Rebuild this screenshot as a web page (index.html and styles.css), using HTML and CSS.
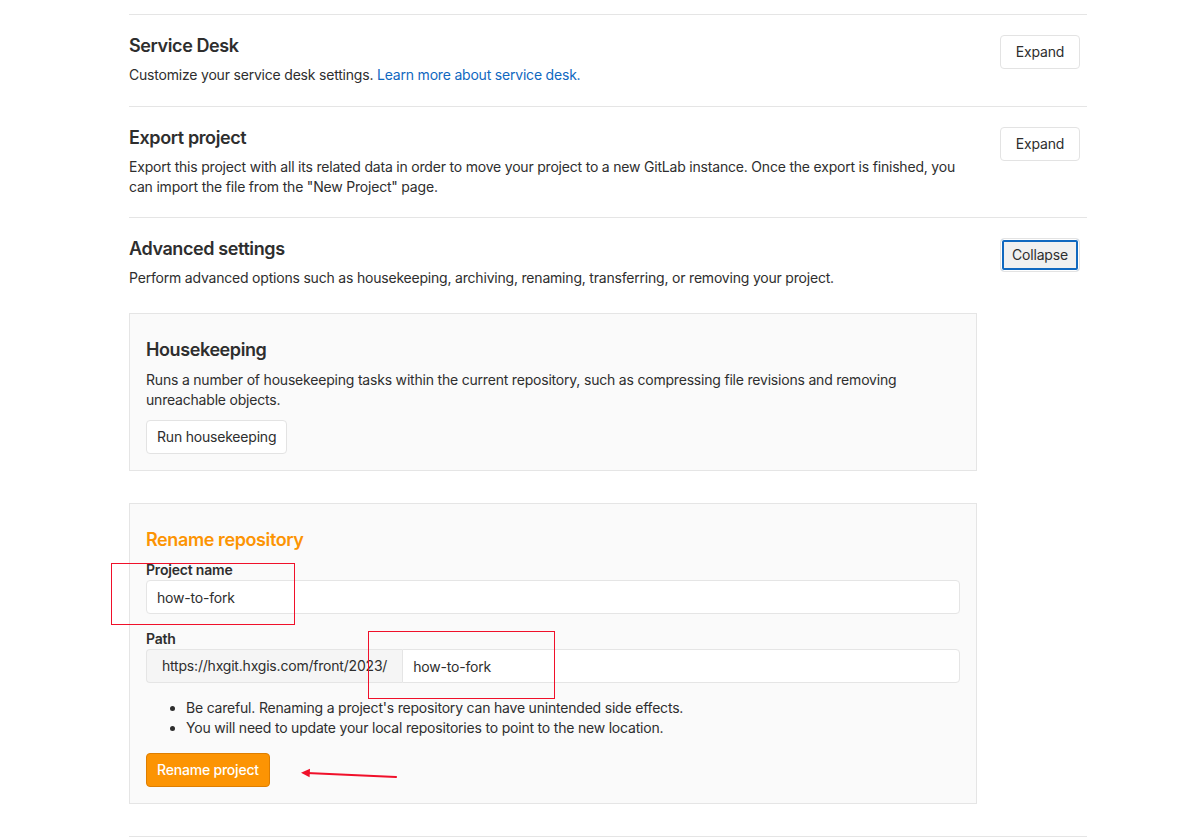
FILE: index.html
```html
<!DOCTYPE html>
<html lang="en">
<head>
<meta charset="utf-8">
<title>Settings</title>
<link rel="stylesheet" href="styles.css">
</head>
<body>
<div class="page">
  <section class="settings">
    <div class="settings-header">
      <div class="settings-text">
        <h4 class="settings-title">Service Desk</h4>
        <p class="settings-desc">Customize your service desk settings. <a href="#" class="link">Learn more about service desk.</a></p>
      </div>
      <button class="btn">Expand</button>
    </div>
  </section>

  <section class="settings settings-tight">
    <div class="settings-header">
      <div class="settings-text">
        <h4 class="settings-title">Export project</h4>
        <p class="settings-desc">Export this project with all its related data in order to move your project to a new GitLab instance. Once the export is finished, you can import the file from the "New Project" page.</p>
      </div>
      <button class="btn">Expand</button>
    </div>
  </section>

  <section class="settings settings-last">
    <div class="settings-header">
      <div class="settings-text">
        <h4 class="settings-title">Advanced settings</h4>
        <p class="settings-desc">Perform advanced options such as housekeeping, archiving, renaming, transferring, or removing your project.</p>
      </div>
      <button class="btn btn-focus">Collapse</button>
    </div>

    <div class="settings-content">
      <div class="sub-box">
        <h4 class="sub-title">Housekeeping</h4>
        <p class="sub-desc">Runs a number of housekeeping tasks within the current repository, such as compressing file revisions and removing unreachable objects.</p>
        <button class="btn">Run housekeeping</button>
      </div>

      <div class="sub-box rename-box">
        <h4 class="sub-title warning">Rename repository</h4>
        <div class="form-group">
          <label class="label">Project name</label>
          <input class="input" type="text" value="how-to-fork">
        </div>
        <div class="form-group">
          <label class="label">Path</label>
          <div class="input-group">
            <span class="prefix">https://hxgit.hxgis.com/front/2023/</span>
            <input class="input input-grow" type="text" value="how-to-fork">
          </div>
        </div>
        <ul class="notes">
          <li>Be careful. Renaming a project's repository can have unintended side effects.</li>
          <li>You will need to update your local repositories to point to the new location.</li>
        </ul>
        <button class="btn btn-warning">Rename project</button>
      </div>
    </div>
  </section>
</div>

<div class="annot annot-1"></div>
<div class="annot annot-2"></div>
<svg class="annot-arrow" width="100" height="14" viewBox="0 0 100 14">
  <line x1="95" y1="9" x2="6" y2="5" stroke="#f0102a" stroke-width="2.2" stroke-linecap="round"/>
  <polygon points="0,4.8 9,0.8 8.6,9.2" fill="#f0102a"/>
</svg>
</body>
</html>
```

FILE: styles.css
```css
* { box-sizing: border-box; }

html, body {
  margin: 0;
  padding: 0;
  background: #fff;
}

body {
  font-family: Inter, "Noto Sans", "Liberation Sans", sans-serif;
  font-size: 14px;
  line-height: 20px;
  letter-spacing: -0.2px;
  color: #2e2e2e;
  position: relative;
  min-height: 839px;
}

.page {
  margin-left: 129px;
  width: 958px;
  padding-top: 14px;
}

.settings {
  border-top: 1px solid #e5e5e5;
  padding: 19px 0 21px;
}

.settings-tight {
  padding-bottom: 20px;
}

.settings-last {
  border-bottom: 1px solid #e5e5e5;
  padding-bottom: 32px;
}

.settings-header {
  display: flex;
  align-items: flex-start;
  justify-content: space-between;
}

.settings-text {
  width: 848px;
}

.settings-title {
  margin: 0 0 7px;
  font-size: 18px;
  line-height: 24px;
  font-weight: 600;
  letter-spacing: -0.4px;
  color: #2e2e2e;
}

.settings-desc {
  margin: 0;
  color: #2e2e2e;
}

.link {
  color: #1068bf;
  text-decoration: none;
}

.btn {
  font-family: inherit;
  font-size: 14px;
  line-height: 20px;
  letter-spacing: -0.2px;
  height: 34px;
  padding: 6px 10px;
  background: #fff;
  border: 1px solid #e3e3e3;
  border-radius: 4px;
  color: #2e2e2e;
  cursor: pointer;
}

.settings-header .btn {
  margin-top: 1px;
  margin-right: 7px;
  width: 80px;
  padding: 6px 0;
}

.btn-focus {
  background: #f0f0f0;
  border-color: #e3e3e3;
  box-shadow: inset 0 0 0 1px #fff, inset 0 0 0 3px #1068bf;
}

.settings-content {
  padding-top: 25px;
  display: flex;
  flex-direction: column;
  gap: 32px;
}

.sub-box {
  width: 848px;
  background: #fafafa;
  border: 1px solid #e5e5e5;
  padding: 24px 16px 16px;
}

.sub-title {
  margin: 0 0 8px;
  font-size: 18px;
  line-height: 24px;
  font-weight: 600;
  letter-spacing: -0.4px;
  color: #2e2e2e;
}

.sub-title.warning {
  color: #fc9403;
}

.sub-desc {
  margin: 0 0 10px;
}

.form-group {
  margin-bottom: 15px;
}

.label {
  display: block;
  font-weight: 600;
  margin-bottom: 0;
}

.input {
  display: block;
  width: 100%;
  height: 34px;
  padding: 6px 10px;
  font-family: inherit;
  font-size: 14px;
  letter-spacing: -0.2px;
  color: #2e2e2e;
  background: #fff;
  border: 1px solid #e5e5e5;
  border-radius: 4px;
}

.input-group {
  display: flex;
  height: 34px;
}

.prefix {
  display: flex;
  align-items: center;
  padding: 0 15px;
  background: #f5f5f5;
  border: 1px solid #e5e5e5;
  border-right: none;
  border-radius: 4px 0 0 4px;
  color: #2e2e2e;
  white-space: nowrap;
}

.input-grow {
  flex: 1;
  width: auto;
  border-radius: 0 4px 4px 0;
}

.notes {
  margin: 0 0 15px;
  padding-left: 40px;
}

.btn-warning {
  background: #fc9403;
  border-color: #de7e00;
  color: #fff;
  font-weight: 500;
  padding: 6px 10px;
}

.annot {
  position: absolute;
  border: 1.5px solid #f0102a;
}

.annot-1 {
  left: 111px;
  top: 563px;
  width: 184px;
  height: 62px;
}

.annot-2 {
  left: 368px;
  top: 631px;
  width: 187px;
  height: 68px;
}

.annot-arrow {
  position: absolute;
  left: 301px;
  top: 768px;
}
```
